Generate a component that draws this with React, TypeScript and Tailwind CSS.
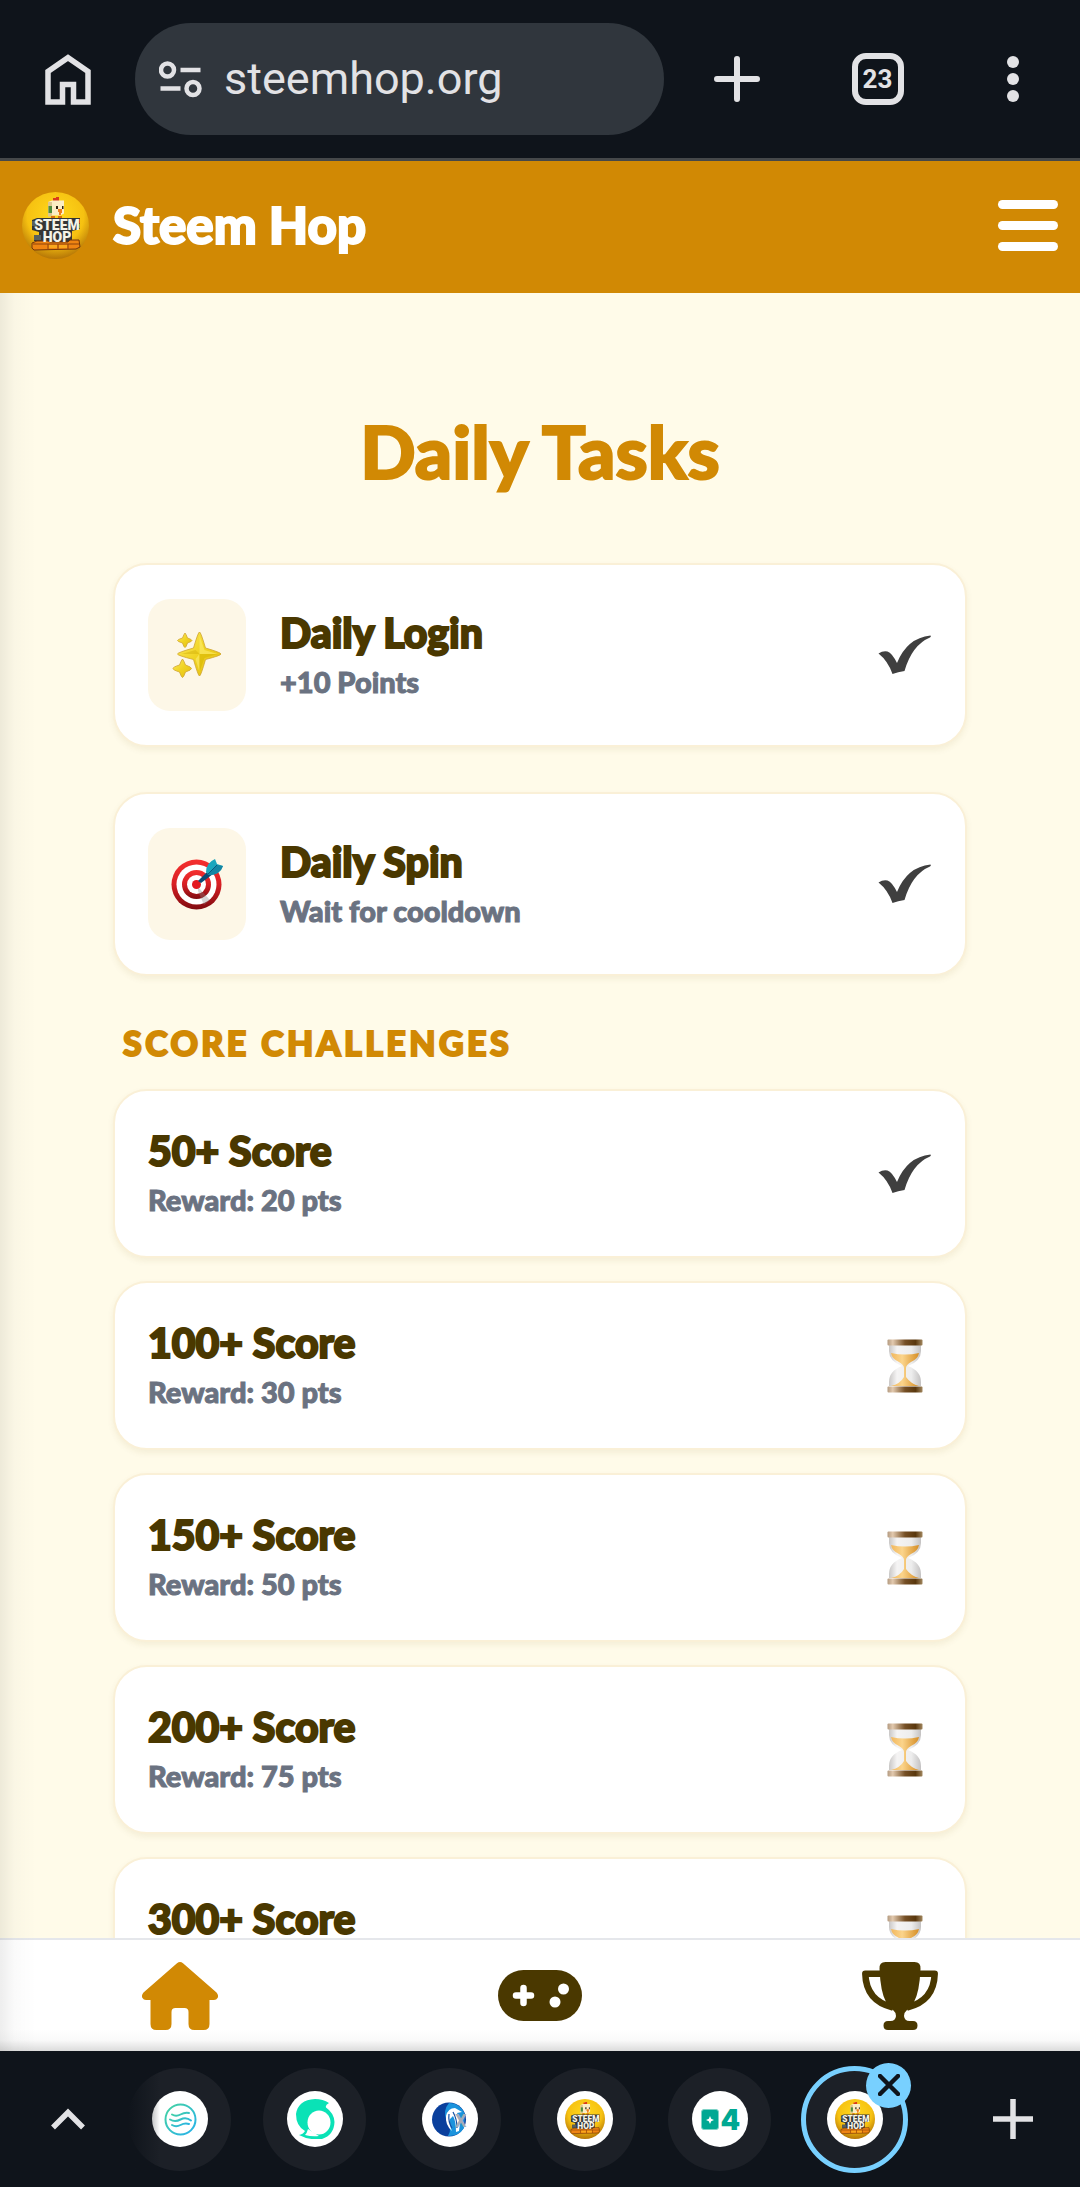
import React from 'react';

interface DailyTask {
  title: string;
  detail: string;
  icon: React.ReactNode;
  done: boolean;
}

interface ScoreTask {
  score: number;
  reward: number;
  done: boolean;
}

const HopLogo = ({ className, id }: { className: string; id: string }) => (
  <svg viewBox="0 0 67 67" className={className} aria-hidden="true">
    <defs>
      <radialGradient id={id} cx="0.5" cy="0.35" r="0.65">
        <stop offset="0" stopColor="#ffd91c" />
        <stop offset="0.65" stopColor="#f6c111" />
        <stop offset="1" stopColor="#b57607" />
      </radialGradient>
    </defs>
    <circle cx="33.5" cy="33.5" r="33.5" fill={`url(#${id})`} />
    <path d="M31 10v-4h3v-1h3v5z" fill="#d93a1c" />
    <path d="M26 10l4-1.500h12v13l-4 2h-12z" fill="#fbedc4" />
    <path d="M26 10h4v14.500h-4z" fill="#dcc690" />
    <path d="M26.500 14h3.500v7h-3.500z" fill="#4c8d3c" />
    <path d="M34 14h2v3h-2zM40 14h1.500v3h-1.500z" fill="#30220f" />
    <path d="M36 17h4v4h-1v2h-2v-3h-1z" fill="#ee7c1d" />
    <path d="M29 24h4v3h-4zM36 24h4v3h-4z" fill="#d9700e" />
    <path d="M10 28l5-2 43 0v11l-8 2v12h-29v-2h-9v-6h5v-3l-7-2z" fill="#343635" />
    <path d="M10 29h5v5h-5zM12 43h7v5h-7z" fill="#57605e" />
    <path d="M56 27h2v4h-2z" fill="#cf3b20" />
    <path d="M56 32h2v4h-2z" fill="#469345" />
    <path d="M10 51l5-2h11l2 1h18l2-2h9l1 7-4 2-42 1-2-2z" fill="#ef8412" stroke="#74360a" />
    <path d="M26 52v5M36 52v5M46 52v5M11 52h46" stroke="#8d430b" />
    <path d="M27 53h8v3h-8zM37 53h8v3h-8z" fill="#f9a81c" />
    <text x="35" y="38" textAnchor="middle" fontFamily="Roboto, sans-serif" fontWeight="900" fontSize="14" fill="#f4f3e8">STEEM</text>
    <text x="35" y="49.500" textAnchor="middle" fontFamily="Roboto, sans-serif" fontWeight="900" fontSize="14" fill="#f4f3e8">HOP</text>
  </svg>
);

const Sparkles = () => (
  <svg viewBox="0 0 50 48" className="w-[50px] h-12" aria-hidden="true">
    <defs>
      <linearGradient id="sparkle" x1="0" y1="0" x2="1" y2="1">
        <stop offset="0" stopColor="#fdea61" />
        <stop offset="0.5" stopColor="#f0d321" />
        <stop offset="1" stopColor="#e3bc12" />
      </linearGradient>
    </defs>
    <g fill="url(#sparkle)" stroke="#cfa534" strokeWidth="0.800" strokeLinejoin="round">
      <path d="M27.500 1Q28.800 1 33.500 17Q49 21.500 49 23Q49 24.500 33.500 28.500Q28.800 45 27.500 45Q26.200 45 21.500 28.500Q5.500 24.500 5.500 23Q5.500 21.500 21.500 17Q26.200 1 27.500 1z" />
      <path d="M13 2Q14 3 15.500 7Q20 8.500 20 9.500Q20 10.500 15.500 12Q14 16.500 13 16.500Q12 16.500 10.500 12Q5.500 10.500 5.500 9.500Q5.500 8.500 10.500 7Q12 3 13 2z" />
      <path d="M10.500 28Q11.500 29 13.500 34Q19.500 36 19.500 37.500Q19.500 39 13.500 41Q11.500 46.500 10.500 46.500Q9.500 46.500 7.500 41Q1 39 1 37.500Q1 36 7.500 34Q9.500 29 10.500 28z" />
    </g>
    <path d="M27.500 5v18l18 0-13-4zM27.500 23v18l-4-13z" fill="#fff27d" opacity="0.500" />
    <path d="M27.500 23l18 0-13 4-5 14z" fill="#d6b400" opacity="0.550" />
    <path d="M27.500 23l-18 0 14-4z" fill="#c9a300" opacity="0.350" />
  </svg>
);

const Target = () => (
  <svg viewBox="0 0 52 52" className="w-[52px] h-[52px]" aria-hidden="true">
    <defs>
      <linearGradient id="target-red" x1="0" y1="0" x2="0" y2="1">
        <stop offset="0" stopColor="#f5302f" />
        <stop offset="0.500" stopColor="#d71f24" />
        <stop offset="1" stopColor="#7f0b10" />
      </linearGradient>
    </defs>
    <circle cx="25.500" cy="26.500" r="25" fill="url(#target-red)" />
    <circle cx="25.500" cy="26.500" r="20" fill="#fff" />
    <circle cx="25.500" cy="26.500" r="14.500" fill="url(#target-red)" />
    <circle cx="25.500" cy="26.500" r="9.500" fill="#fff" />
    <circle cx="25.500" cy="26.500" r="4.500" fill="#e3191f" />
    <path d="M27 29l12 13-6 5-6-14z" fill="#8a8a8a" opacity="0.350" />
    <path d="M27 23l11-11 4 4-12 9z" fill="#0b4a74" />
    <path d="M35 14q0-9 9-13l2 5 6 2q-3 9-14 9z" fill="#1ba6bd" />
    <path d="M37 16l9-9 6 1q-3 9-14 9z" fill="#1486a4" />
    <path d="M36 17l10-10" stroke="#0a587e" />
  </svg>
);

const Check = () => (
  <svg viewBox="0 0 54 40" className="w-[54px] h-10" role="img" aria-label="Completed">
    <path d="M0.500 18.500Q5 15.500 9.500 16.500Q14 18 19 28Q29 3 52.500 0.500Q53.500 1.500 52 2.500Q34 10 26.500 36Q20 37 14.500 39Q10 26 0.500 18.500z" fill="#3f3f3f" />
  </svg>
);

const Hourglass = () => (
  <svg viewBox="0 0 54 54" className="w-[54px] h-[54px]" role="img" aria-label="Pending">
    <defs>
      <linearGradient id="wood">
        <stop offset="0" stopColor="#b39a80" />
        <stop offset="0.150" stopColor="#e2c9ae" />
        <stop offset="0.500" stopColor="#765026" />
        <stop offset="0.800" stopColor="#59370d" />
        <stop offset="1" stopColor="#a2875f" />
      </linearGradient>
      <linearGradient id="glass">
        <stop offset="0" stopColor="#c9c7c6" />
        <stop offset="0.250" stopColor="#f5f4f4" />
        <stop offset="0.700" stopColor="#ededed" />
        <stop offset="1" stopColor="#c4c2c2" />
      </linearGradient>
      <linearGradient id="sand">
        <stop offset="0" stopColor="#f2b75c" />
        <stop offset="0.400" stopColor="#fbd48b" />
        <stop offset="1" stopColor="#d68e25" />
      </linearGradient>
    </defs>
    <path d="M11 6h32v6q0 10-13 15q13 5 13 16v4h-32v-4q0-11 13-16q-13-5-13-15z" fill="url(#glass)" />
    <path d="M13 14q14 3 28 0q-1 6-8 9q-5 3-5 6v9q5 7 13 9h-28q9-2 13-9v-9q0-3-5-6q-7-3-8-9z" fill="url(#sand)" />
    <rect x="9.500" y="0.500" width="35" height="6" rx="1" fill="url(#wood)" />
    <rect x="9.500" y="47.500" width="35" height="6" rx="1" fill="url(#wood)" />
  </svg>
);

const WaveFavicon = () => (
  <svg viewBox="0 0 40 40" className="w-10 h-10" aria-hidden="true">
    <defs>
      <linearGradient id="wave" x1="0" y1="0" x2="1" y2="1">
        <stop offset="0" stopColor="#45d3a0" />
        <stop offset="1" stopColor="#27b1ec" />
      </linearGradient>
    </defs>
    <g fill="none" stroke="url(#wave)" strokeWidth="2" strokeLinecap="round">
      <circle cx="20.500" cy="20.500" r="15" />
      <path d="M12 15.500q4 2.500 8.500 0t8.500-1.500M10 20.500q5 3 10.500 0t10.500 1M12 26q4 2.500 8.500 0t8.500-1" />
    </g>
  </svg>
);

const SteemFavicon = () => (
  <svg viewBox="0 0 40 40" className="w-10 h-10" aria-hidden="true">
    <path d="M34 4Q30 6 31 8.500Q39 14 39.500 23Q39 36 27 40Q14 41.500 4 36Q8 35.500 10 32Q1 27 1 15Q3 1 20 0Q28 0 34 4z" fill="#0ae2b6" />
    <ellipse cx="24" cy="23.500" rx="11.500" ry="12" fill="#fff" />
    <path d="M13 30q-1 4-3 6q7 2 14 1z" fill="#fff" />
  </svg>
);

const GlobeFavicon = () => (
  <svg viewBox="0 0 40 40" className="w-10 h-10" aria-hidden="true">
    <circle cx="19" cy="20.500" r="17" fill="#0a3f9c" />
    <path d="M19 4a16.500 16.500 0 0 1 16 12l-1 13a16.500 16.500 0 0 1-16 8q5-8-2-17q-3-9 3-16z" fill="#1b93dc" />
    <path d="M16 17q2-8 9-8l7 4-5 1q4 7 2 18l-3 1q0-11-3-16l-3 3q-1 6 2 12q-7-6-6-15z" fill="#fff" />
    <path d="M19 15q-1 8 3 14M23 13q4 7 4 16" stroke="#124fa5" strokeWidth="1.200" fill="none" />
    <text x="25" y="28" fontFamily="Roboto, sans-serif" fontWeight="700" fontSize="18" fill="#a4adb8">X</text>
  </svg>
);

const FourFavicon = () => (
  <svg viewBox="0 0 40 40" className="w-10 h-10" aria-hidden="true">
    <rect x="1.500" y="10.500" width="17" height="20" rx="2.500" fill="#00a893" stroke="#7fd3c7" />
    <path d="M10 17l1.200 2.800 2.800 1.200-2.800 1.200-1.200 2.800-1.200-2.800-2.800-1.200 2.800-1.200z" fill="#fff" />
    <text x="20.500" y="30.500" fontFamily="Inter, sans-serif" fontWeight="900" fontSize="28" fill="#00a893">4</text>
  </svg>
);

const dailyTasks: DailyTask[] = [
  { title: 'Daily Login', detail: '+10 Points', icon: <Sparkles />, done: true },
  { title: 'Daily Spin', detail: 'Wait for cooldown', icon: <Target />, done: true },
];

const scoreTasks: ScoreTask[] = [
  { score: 50, reward: 20, done: true },
  { score: 100, reward: 30, done: false },
  { score: 150, reward: 50, done: false },
  { score: 200, reward: 75, done: false },
  { score: 300, reward: 100, done: false },
];

const openTabs = [
  { name: 'Waves', icon: <WaveFavicon /> },
  { name: 'Steem', icon: <SteemFavicon /> },
  { name: 'Globe', icon: <GlobeFavicon /> },
  { name: 'Steem Hop', icon: <HopLogo className="w-10 h-10" id="hop-tab" /> },
  { name: 'Four', icon: <FourFavicon /> },
  { name: 'Steem Hop, current tab', icon: <HopLogo className="w-10 h-10" id="hop-current" />, active: true },
];

interface TaskCardProps {
  title: string;
  detail: string;
  done: boolean;
  icon?: React.ReactNode;
}

const TaskCard: React.FC<TaskCardProps> = ({ title, detail, done, icon }) => (
  <li className="flex items-center rounded-[34px] border-2 border-[#faf0d7] bg-white px-[33px] py-[34px] shadow-[0_3px_6px_rgba(120,90,0,0.08)]">
    {icon && (
      <div className="mr-[34px] flex h-28 w-[98px] shrink-0 items-center justify-center rounded-[22px] bg-[#fdf7e7]">
        {icon}
      </div>
    )}
    <div className="flex-1">
      <h3 className="text-[41px] leading-[52px] font-black text-[#4a3800] [-webkit-text-stroke:2px_#4a3800]">{title}</h3>
      <p className="text-[29px] leading-[45px] font-black text-gray-500 [-webkit-text-stroke:1px_#6b7280]">{detail}</p>
    </div>
    {done ? <Check /> : <Hourglass />}
  </li>
);

const BrowserBar = () => (
  <div className="flex h-[161px] shrink-0 items-center border-b-[3px] border-[#45484a] bg-[#0f141b] text-[#e2e2e5]">
    <button type="button" aria-label="Home" className="flex w-[135px] justify-center">
      <svg viewBox="0 0 46 51" className="h-[51px] w-[46px]" fill="none" stroke="currentColor" strokeWidth="5.500">
        <path d="M3 48V17.500L23 3.700L43 17.500V48H28.500V30.500H17.500V48Z" />
      </svg>
    </button>
    <div className="flex h-28 flex-1 items-center gap-[22px] rounded-full bg-[#30363d] pl-6">
      <svg viewBox="0 0 43 37" className="h-[37px] w-[43px] shrink-0" fill="none" stroke="currentColor" strokeWidth="4.500" aria-hidden="true">
        <circle cx="8.500" cy="9" r="6.500" />
        <circle cx="34" cy="27.500" r="6.500" />
        <path d="M21.500 9H41.500M1.500 27.500H21.500" />
      </svg>
      <input
        type="text"
        aria-label="Address"
        defaultValue="steemhop.org"
        className="w-full min-w-0 bg-transparent font-[Roboto,sans-serif] text-[45px] leading-[60px] outline-none"
      />
    </div>
    <button type="button" aria-label="New tab" className="flex w-[145px] justify-center">
      <svg viewBox="0 0 46 46" className="h-[46px] w-[46px]" stroke="currentColor" strokeWidth="6" strokeLinecap="round">
        <path d="M23 3V43M3 23H43" />
      </svg>
    </button>
    <button type="button" aria-label="Open tabs" className="flex w-[137px] justify-center">
      <span className="flex h-[52px] w-[52px] items-center justify-center rounded-[14px] border-[6px] border-current font-[Roboto,sans-serif] text-[26px] leading-none font-bold">
        23
      </span>
    </button>
    <button type="button" aria-label="More options" className="flex w-[134px] justify-center">
      <svg viewBox="0 0 12 46" className="h-[46px] w-3" fill="currentColor">
        <circle cx="6" cy="6" r="6" />
        <circle cx="6" cy="23" r="6" />
        <circle cx="6" cy="40" r="6" />
      </svg>
    </button>
  </div>
);

const BottomNav = () => (
  <nav className="grid h-[113px] shrink-0 grid-cols-3 items-center border-t-2 border-gray-200 bg-linear-to-t from-[#dcdcdc] via-[#fafafa] via-10% to-white to-20%">
    <a href="#home" aria-label="Home" className="flex justify-center text-[#d18904]">
      <svg viewBox="0 0 76 68" className="h-[68px] w-[76px]" fill="currentColor">
        <path d="M35 1.200Q38-1.200 41 1.200L74.500 30.500Q77 33.500 75.500 36Q74.500 38 72 38H67.500V62Q67.500 68 61.500 68H52.500Q46.500 68 46.500 62V50Q46.500 46 42.500 46H33.500Q29.500 46 29.500 50V62Q29.500 68 23.500 68H14.500Q8.500 68 8.500 62V38H4Q1.500 38 0.500 36Q-1 33.500 1.500 30.500Z" />
      </svg>
    </a>
    <a href="#play" aria-label="Play" className="flex justify-center text-[#4a3800]">
      <svg viewBox="0 0 84 51" className="h-[51px] w-[84px]">
        <rect width="84" height="51" rx="25.500" fill="currentColor" />
        <path d="M25.500 18V33M18 25.500H33" stroke="#fff" strokeWidth="6.500" strokeLinecap="round" />
        <circle cx="57" cy="32" r="5.500" fill="#fff" />
        <circle cx="65.500" cy="19" r="5.500" fill="#fff" />
      </svg>
    </a>
    <a href="#leaderboard" aria-label="Leaderboard" className="flex justify-center text-[#4a3800]">
      <svg viewBox="0 0 76 68" className="h-[68px] w-[76px]">
        <path d="M20 11.700H3.300Q4 39 31 45.500M56 11.700H72.700Q72 39 45 45.500" fill="none" stroke="currentColor" strokeWidth="6.500" strokeLinejoin="round" />
        <path d="M23.500 0H52.500Q59 0 58.500 7Q57.500 30 52 40Q49 46 44.500 48.500Q42 50.500 42 54Q42.500 59 47.500 59H51Q55.500 59 55.500 63.500Q55.500 68 51 68H26Q21.500 68 21.500 63.500Q21.500 59 26 59H28.500Q33.500 59 34 54Q34 50.500 31.500 48.500Q27 46 24 40Q18.500 30 17.500 7Q17 0 23.500 0Z" fill="currentColor" />
      </svg>
    </a>
  </nav>
);

const TabStrip = () => (
  <div className="flex h-[136px] shrink-0 items-center bg-[#0f141b] text-[#e2e2e5]">
    <button type="button" aria-label="Show tab groups" className="flex w-28 justify-center pl-6">
      <svg viewBox="0 0 34 22" className="h-[22px] w-[34px]" fill="none" stroke="currentColor" strokeWidth="5.500">
        <path d="M2 19.500L17 4.500L32 19.500" />
      </svg>
    </button>
    <div className="relative grid flex-1 grid-cols-6">
      {openTabs.map((tab) => (
        <div key={tab.name} className="flex justify-center">
          <div className="relative">
            <button
              type="button"
              aria-label={tab.name}
              className={`flex items-center justify-center rounded-full bg-[#1c2027] ${
                tab.active ? 'h-[107px] w-[107px] border-[5px] border-[#78d0ff]' : 'my-[2px] h-[103px] w-[103px]'
              }`}
            >
              <span className="flex h-14 w-14 items-center justify-center rounded-full bg-white">{tab.icon}</span>
            </button>
            {tab.active && (
              <button
                type="button"
                aria-label="Close tab"
                className="absolute -top-[3px] -right-[3px] flex h-[45px] w-[45px] items-center justify-center rounded-full bg-[#78d0ff] text-[#0f141b]"
              >
                <svg viewBox="0 0 22 22" className="h-[22px] w-[22px]" stroke="currentColor" strokeWidth="4.500" strokeLinecap="round">
                  <path d="M2 2L20 20M20 2L2 20" />
                </svg>
              </button>
            )}
          </div>
        </div>
      ))}
      <div className="pointer-events-none absolute inset-y-0 left-4 w-8 bg-linear-to-r from-[#0f141b] to-transparent" />
    </div>
    <button type="button" aria-label="Add tab to group" className="flex w-[158px] justify-center pl-6">
      <svg viewBox="0 0 40 40" className="h-10 w-10" stroke="currentColor" strokeWidth="5.500">
        <path d="M20 0V40M0 20H40" />
      </svg>
    </button>
  </div>
);

const App: React.FC = () => {
  return (
    <div className="flex h-screen flex-col bg-[#fffbe9] font-[Lato,sans-serif]">
      <BrowserBar />

      <div className="relative flex min-h-0 flex-1 flex-col">
        <header className="flex h-[132px] shrink-0 items-center justify-between bg-[#d18904] px-[22px] pb-1 text-white">
          <a href="#top" className="flex items-center gap-6">
            <HopLogo className="h-[67px] w-[67px]" id="hop-header" />
            <span className="text-[51px] leading-[60px] font-black [-webkit-text-stroke:2px_#fff]">Steem Hop</span>
          </a>
          <button type="button" aria-label="Menu" className="flex w-[60px] flex-col gap-3">
            <span className="h-[9px] rounded-full bg-white" />
            <span className="h-[9px] rounded-full bg-white" />
            <span className="h-[9px] rounded-full bg-white" />
          </button>
        </header>

        <main className="min-h-0 flex-1 overflow-y-auto px-[113px] pt-[118px] [scrollbar-width:none]">
          <h1 className="mb-[72px] text-center text-[73px] leading-[80px] font-black text-[#d18904] [-webkit-text-stroke:2px_#d18904]">
            Daily Tasks
          </h1>
          <ul className="flex flex-col gap-[45px]">
            {dailyTasks.map((task) => (
              <TaskCard key={task.title} {...task} />
            ))}
          </ul>
          <h2 className="mt-[45px] mb-6 pl-[10px] text-[34px] leading-[44px] font-black tracking-widest text-[#d18904] uppercase [-webkit-text-stroke:2px_#d18904]">
            Score Challenges
          </h2>
          <ul className="flex flex-col gap-[23px]">
            {scoreTasks.map((task) => (
              <TaskCard
                key={task.score}
                title={`${task.score}+ Score`}
                detail={`Reward: ${task.reward} pts`}
                done={task.done}
              />
            ))}
          </ul>
        </main>

        <BottomNav />
        <div className="pointer-events-none absolute top-[132px] bottom-0 left-0 w-9 bg-linear-to-r from-black/7 via-black/2 via-40% to-transparent" />
      </div>

      <TabStrip />
    </div>
  );
};

export default App;
